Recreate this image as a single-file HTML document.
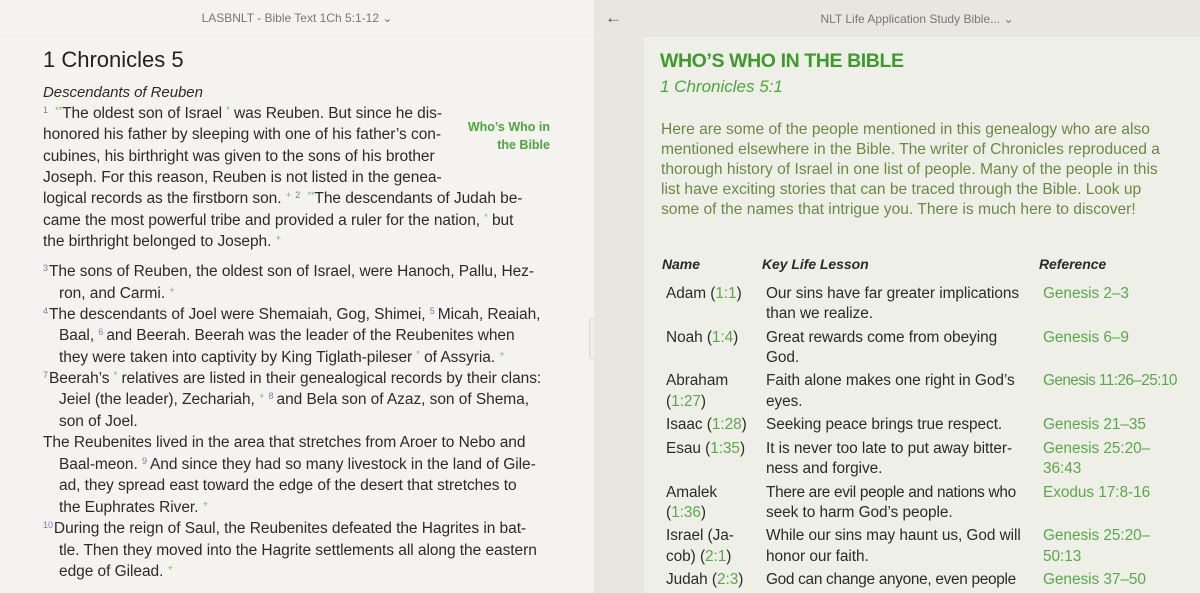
<!DOCTYPE html>
<html><head><meta charset="utf-8"><style>
*{margin:0;padding:0;box-sizing:border-box}
body{width:1200px;height:593px;overflow:hidden;position:relative;font-family:"Liberation Sans",sans-serif;background:#f4f3ef}
.l{position:absolute;white-space:nowrap;font-size:15.5px;color:#2b2b2b;line-height:20px;letter-spacing:-0.05px;transform:translateY(2px)}
.vn{color:#7b7ba8;font-size:9px;vertical-align:5px;margin-right:3px;line-height:0}
.g{color:#6cb85a;font-size:9px;vertical-align:5px;line-height:0}
#left{position:absolute;left:0;top:0;width:594px;height:593px;background:#f4f3ef}
#right{position:absolute;left:594px;top:0;width:606px;height:593px;background:#e8e6e1}
#card{position:absolute;left:644px;top:37px;width:556px;height:556px;background:#eef0e7}
.r{position:absolute;white-space:nowrap;font-size:15.4px;color:#2b2b2b;line-height:20px;letter-spacing:-0.05px}
.gr{color:#5aa84a}
.p{position:absolute;white-space:nowrap;font-size:15.6px;color:#6a8a43;line-height:20px;left:661px}
</style></head><body>
<div id="left">
 <div style="position:absolute;left:0;top:11px;width:594px;text-align:center;font-size:12px;color:#777">LASBNLT - Bible Text 1Ch 5:1-12 &#8964;</div>
 <div style="position:absolute;left:0;top:36px;width:594px;height:1px;background:#efeeea"></div>
 <div style="position:absolute;left:43px;top:47px;font-size:22px;color:#222">1 Chronicles 5</div>
 <div class="l" style="left:43px;top:81px;font-style:italic;font-size:15px">Descendants of Reuben</div>
 <div class="l" style="left:43px;top:102px"><span class="vn">1</span> <span class="g">**</span>The oldest son of Israel <span class="g">*</span> was Reuben. But since he dis-</div>
 <div class="l" style="left:43px;top:123px">honored his father by sleeping with one of his father’s con-</div>
 <div class="l" style="left:43px;top:145px">cubines, his birthright was given to the sons of his brother</div>
 <div class="l" style="left:43px;top:166px">Joseph. For this reason, Reuben is not listed in the genea-</div>
 <div class="l" style="left:43px;top:187px">logical records as the firstborn son. <span class="g">+</span> <span class="vn">2</span> <span class="g">**</span>The descendants of Judah be-</div>
 <div class="l" style="left:43px;top:209px">came the most powerful tribe and provided a ruler for the nation, <span class="g">*</span> but</div>
 <div class="l" style="left:43px;top:230px">the birthright belonged to Joseph. <span class="g">+</span></div>
 <div style="position:absolute;left:440px;top:118px;width:110px;text-align:right;font-size:12.5px;font-weight:bold;color:#4aa83a;line-height:18px">Who’s Who in<br>the Bible</div>
 <div class="l" style="left:43px;top:260px"><span class="vn" style="margin-right:1px">3</span>The sons of Reuben, the oldest son of Israel, were Hanoch, Pallu, Hez-</div>
 <div class="l" style="left:59px;top:282px">ron, and Carmi. <span class="g">+</span></div>
 <div class="l" style="left:43px;top:303px"><span class="vn" style="margin-right:1px">4</span>The descendants of Joel were Shemaiah, Gog, Shimei, <span class="vn">5</span>Micah, Reaiah,</div>
 <div class="l" style="left:59px;top:324px">Baal, <span class="vn">6</span>and Beerah. Beerah was the leader of the Reubenites when</div>
 <div class="l" style="left:59px;top:346px">they were taken into captivity by King Tiglath-pileser <span class="g">*</span> of Assyria. <span class="g">+</span></div>
 <div class="l" style="left:43px;top:367px"><span class="vn" style="margin-right:1px">7</span>Beerah’s <span class="g">*</span> relatives are listed in their genealogical records by their clans:</div>
 <div class="l" style="left:59px;top:388px">Jeiel (the leader), Zechariah, <span class="g">+</span> <span class="vn">8</span>and Bela son of Azaz, son of Shema,</div>
 <div class="l" style="left:59px;top:410px">son of Joel.</div>
 <div class="l" style="left:43px;top:431px">The Reubenites lived in the area that stretches from Aroer to Nebo and</div>
 <div class="l" style="left:59px;top:453px">Baal-meon. <span class="vn">9</span>And since they had so many livestock in the land of Gile-</div>
 <div class="l" style="left:59px;top:474px">ad, they spread east toward the edge of the desert that stretches to</div>
 <div class="l" style="left:59px;top:496px">the Euphrates River. <span class="g">+</span></div>
 <div class="l" style="left:43px;top:517px"><span class="vn" style="margin-right:1px">10</span>During the reign of Saul, the Reubenites defeated the Hagrites in bat-</div>
 <div class="l" style="left:59px;top:539px">tle. Then they moved into the Hagrite settlements all along the eastern</div>
 <div class="l" style="left:59px;top:560px">edge of Gilead. <span class="g">+</span></div>
 <div style="position:absolute;left:589px;top:318px;width:6px;height:41px;border:1px solid #dcdad5;border-radius:3px;background:#efeeea"></div>
</div>
<div id="right">
 <div style="position:absolute;left:11px;top:8px;font-size:17px;color:#555">&#8592;</div>
 <div style="position:absolute;left:0;top:12px;width:606px;text-align:center;font-size:12px;color:#777;padding-left:40px">NLT Life Application Study Bible... &#8964;</div>
</div>
<div id="card"></div>
<div style="position:absolute;left:660px;top:50px;font-size:19.5px;font-weight:bold;color:#3f9a2e;letter-spacing:-0.4px">WHO’S WHO IN THE BIBLE</div>
<div style="position:absolute;left:660px;top:77px;font-size:17px;font-style:italic;color:#4aa83a">1 Chronicles 5:1</div>
<div class="p" style="top:120px">Here are some of the people mentioned in this genealogy who are also</div>
<div class="p" style="top:140px">mentioned elsewhere in the Bible. The writer of Chronicles reproduced a</div>
<div class="p" style="top:160px">thorough history of Israel in one list of people. Many of the people in this</div>
<div class="p" style="top:180px">list have exciting stories that can be traced through the Bible. Look up</div>
<div class="p" style="top:200px">some of the names that intrigue you. There is much here to discover!</div>
<div class="r" style="left:662px;top:254px;font-weight:bold;font-style:italic;font-size:14px">Name</div>
<div class="r" style="left:762px;top:254px;font-weight:bold;font-style:italic;font-size:14px">Key Life Lesson</div>
<div class="r" style="left:1039px;top:254px;font-weight:bold;font-style:italic;font-size:14px">Reference</div>

<div class="r" style="left:666px;top:284px">Adam (<span class="gr">1:1</span>)</div>
<div class="r" style="left:766px;top:284px">Our sins have far greater implications</div>
<div class="r" style="left:766px;top:304px">than we realize.</div>
<div class="r gr" style="left:1043px;top:284px">Genesis 2–3</div>

<div class="r" style="left:666px;top:328px">Noah (<span class="gr">1:4</span>)</div>
<div class="r" style="left:766px;top:328px">Great rewards come from obeying</div>
<div class="r" style="left:766px;top:348px">God.</div>
<div class="r gr" style="left:1043px;top:328px">Genesis 6–9</div>

<div class="r" style="left:666px;top:371px">Abraham</div>
<div class="r" style="left:666px;top:392px">(<span class="gr">1:27</span>)</div>
<div class="r" style="left:766px;top:371px">Faith alone makes one right in God’s</div>
<div class="r" style="left:766px;top:392px">eyes.</div>
<div class="r gr" style="left:1043px;top:371px;font-size:15.4px;letter-spacing:-0.6px">Genesis 11:26–25:10</div>

<div class="r" style="left:666px;top:415px">Isaac (<span class="gr">1:28</span>)</div>
<div class="r" style="left:766px;top:415px">Seeking peace brings true respect.</div>
<div class="r gr" style="left:1043px;top:415px">Genesis 21–35</div>

<div class="r" style="left:666px;top:439px">Esau (<span class="gr">1:35</span>)</div>
<div class="r" style="left:766px;top:439px">It is never too late to put away bitter-</div>
<div class="r" style="left:766px;top:459px">ness and forgive.</div>
<div class="r gr" style="left:1043px;top:439px">Genesis 25:20–</div>
<div class="r gr" style="left:1043px;top:459px">36:43</div>

<div class="r" style="left:666px;top:483px">Amalek</div>
<div class="r" style="left:666px;top:503px">(<span class="gr">1:36</span>)</div>
<div class="r" style="left:766px;top:483px;letter-spacing:-0.3px">There are evil people and nations who</div>
<div class="r" style="left:766px;top:503px">seek to harm God’s people.</div>
<div class="r gr" style="left:1043px;top:483px">Exodus 17:8-16</div>

<div class="r" style="left:666px;top:526px">Israel (Ja-</div>
<div class="r" style="left:666px;top:547px">cob) (<span class="gr">2:1</span>)</div>
<div class="r" style="left:766px;top:526px">While our sins may haunt us, God will</div>
<div class="r" style="left:766px;top:547px">honor our faith.</div>
<div class="r gr" style="left:1043px;top:526px">Genesis 25:20–</div>
<div class="r gr" style="left:1043px;top:547px">50:13</div>

<div class="r" style="left:666px;top:570px">Judah (<span class="gr">2:3</span>)</div>
<div class="r" style="left:766px;top:570px;letter-spacing:-0.3px">God can change anyone, even people</div>
<div class="r gr" style="left:1043px;top:570px">Genesis 37–50</div>
</body></html>
